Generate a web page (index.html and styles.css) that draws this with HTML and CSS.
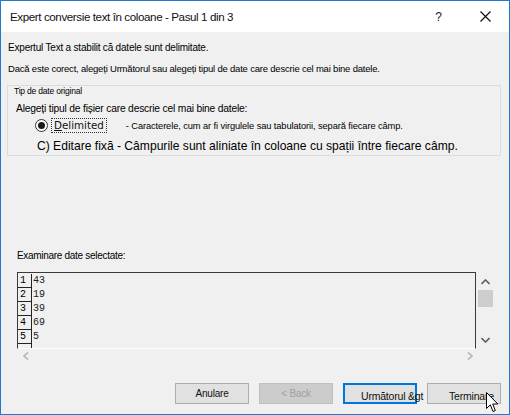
FILE: index.html
```html
<!DOCTYPE html>
<html lang="ro">
<head>
    <meta charset="UTF-8">
    <title>Expert conversie text în coloane</title>
    <link rel="stylesheet" href="styles.css">
</head>
<body>
    <div class="window">
        <div class="titlebar">
            <span class="title">Expert conversie text în coloane - Pasul 1 din 3</span>
            <span class="help">?</span>
            <svg class="close" width="11" height="11" viewBox="0 0 11 11">
                <path d="M0.5 0.5 L10.5 10.5 M10.5 0.5 L0.5 10.5" stroke="#111" stroke-width="1.2" fill="none"/>
            </svg>
        </div>

        <div class="content">
            <p class="intro">Expertul Text a stabilit că datele sunt delimitate.</p>
            <p class="hint">Dacă este corect, alegeți Următorul sau alegeți tipul de date care descrie cel mai bine datele.</p>

            <div class="group">
                <div class="legend">Tip de date original</div>
                <div class="group-label">Alegeți tipul de fișier care descrie cel mai bine datele:</div>
                <div class="radio-row">
                    <span class="radio"><span class="dot"></span></span>
                    <span class="radio-label"><u>D</u>elimited</span>
                    <span class="radio-desc">- Caracterele, cum ar fi virgulele sau tabulatorii, separă fiecare câmp.</span>
                </div>
                <div class="fixed-row">C) Editare fixă - Câmpurile sunt aliniate în coloane cu spații între fiecare câmp.</div>
            </div>

            <div class="preview-label">Examinare date selectate:</div>
            <div class="preview">
                <div class="grid">
                    <div class="row"><span class="num">1</span><span class="val">43</span></div>
                    <div class="row"><span class="num">2</span><span class="val">19</span></div>
                    <div class="row"><span class="num">3</span><span class="val">39</span></div>
                    <div class="row"><span class="num">4</span><span class="val">69</span></div>
                    <div class="row"><span class="num">5</span><span class="val">5</span></div>
                    <div class="row"><span class="num"></span><span class="val"></span></div>
                </div>
                <div class="vscroll">
                    <svg width="9" height="6" viewBox="0 0 9 6"><path d="M0.5 5 L4.5 1 L8.5 5" stroke="#606060" stroke-width="1.6" fill="none"/></svg>
                    <div class="thumb"></div>
                    <svg class="down" width="9" height="6" viewBox="0 0 9 6"><path d="M0.5 1 L4.5 5 L8.5 1" stroke="#606060" stroke-width="1.6" fill="none"/></svg>
                </div>
            </div>
            <div class="hscroll">
                <svg width="6" height="8" viewBox="0 0 6 8"><path d="M5 0.5 L1 4 L5 7.5" stroke="#b4b4b4" stroke-width="1.6" fill="none"/></svg>
                <svg width="6" height="8" viewBox="0 0 6 8"><path d="M1 0.5 L5 4 L1 7.5" stroke="#b4b4b4" stroke-width="1.6" fill="none"/></svg>
            </div>

            <div class="buttons">
                <button class="btn btn-center">Anulare</button>
                <button class="btn btn-center" disabled>&lt; Back</button>
                <button class="btn btn-focus">Următorul &amp;gt</button>
                <button class="btn btn-finish">Terminare</button>
            </div>
        </div>

        <svg class="cursor" width="13" height="21" viewBox="0 0 13 21">
            <path d="M0.5 0.5 L0.5 16.5 L4.3 12.8 L7 19.5 L9.3 18.5 L6.7 12 L11.8 12 Z" fill="#fff" stroke="#000" stroke-width="1"/>
        </svg>
    </div>
</body>
</html>
```

FILE: styles.css
```css
* {
    box-sizing: border-box;
}

body {
    margin: 0;
    font-family: 'Liberation Sans', Arial, sans-serif;
    color: #000;
    background: #f0f0f0;
}

.window {
    position: relative;
    width: 510px;
    height: 415px;
    border: 1px solid #1f7bd0;
    background: #f0f0f0;
    display: flex;
    flex-direction: column;
    overflow: hidden;
}

.titlebar {
    height: 31px;
    background: #fff;
    display: flex;
    align-items: center;
    padding-left: 9px;
}

.title {
    flex: 1;
    font-size: 11.6px;
    letter-spacing: -0.4px;
    color: #111;
}

.help {
    font-size: 12px;
    margin-right: 38px;
    color: #222;
}

.close {
    margin-right: 18px;
}

.content {
    flex: 1;
    display: flex;
    flex-direction: column;
}

.intro,
.hint {
    margin: 0 0 0 7px;
    line-height: 14px;
    letter-spacing: -0.2px;
}

.intro {
    margin-top: 9px;
    font-size: 10px;
}

.hint {
    margin-top: 7px;
    font-size: 9.5px;
}

.group {
    margin: 9px 8px 0 6px;
    border: 1px solid #dcdcdc;
    padding-bottom: 1px;
}

.legend {
    font-size: 8.5px;
    line-height: 10px;
    padding-left: 6px;
    letter-spacing: -0.2px;
}

.group-label {
    font-size: 10.3px;
    line-height: 12px;
    margin-top: 7px;
    padding-left: 8px;
    letter-spacing: -0.2px;
}

.radio-row {
    display: flex;
    align-items: center;
    height: 14px;
    margin-top: 3px;
    padding-left: 27px;
}

.radio {
    width: 13px;
    height: 13px;
    border: 1px solid #333;
    border-radius: 50%;
    display: flex;
    align-items: center;
    justify-content: center;
    background: #fff;
}

.dot {
    width: 7px;
    height: 7px;
    border-radius: 50%;
    background: #1a1a1a;
}

.radio-label {
    margin-left: 3px;
    padding: 0 2px;
    font-family: 'DejaVu Sans', Verdana, sans-serif;
    font-size: 10.3px;
    line-height: 13px;
    border: 1px dotted #333;
    color: #111;
}

.radio-desc {
    margin-left: 19px;
    font-size: 9.3px;
    letter-spacing: -0.1px;
    padding-top: 2px;
}

.fixed-row {
    margin-top: 6px;
    padding-left: 29px;
    font-size: 12.1px;
    line-height: 16px;
}

.preview-label {
    margin: 94px 0 0 16px;
    font-size: 10px;
    line-height: 12px;
    letter-spacing: -0.3px;
}

.preview {
    display: flex;
    margin: 10px 0 0 16px;
    height: 77px;
}

.grid {
    width: 459px;
    border: 1px solid #3a3a3a;
    border-bottom-color: #fff;
    overflow: hidden;
    font-family: 'Liberation Mono', 'Courier New', monospace;
    font-size: 10px;
    padding-top: 1px;
}

.row {
    display: flex;
    height: 14px;
}

.num {
    width: 14px;
    border-right: 1px solid #222;
    border-bottom: 1px solid #222;
    padding-left: 2px;
    line-height: 14px;
}

.val {
    padding-left: 1px;
    line-height: 14px;
    color: #222;
}

.vscroll {
    width: 17px;
    margin-left: 1px;
    display: flex;
    flex-direction: column;
    align-items: center;
    padding-top: 7px;
}

.thumb {
    width: 15px;
    height: 17px;
    margin-top: 5px;
    background: #cdcdcd;
}

.vscroll .down {
    margin-top: auto;
    margin-bottom: 6px;
}

.hscroll {
    display: flex;
    justify-content: space-between;
    align-items: center;
    height: 14px;
    margin: 0 0 0 22px;
    width: 450px;
}

.buttons {
    display: flex;
    justify-content: flex-end;
    gap: 10px;
    margin: 20px 8px 0 0;
}

.btn {
    width: 74px;
    height: 21px;
    font-family: 'Liberation Sans', Arial, sans-serif;
    font-size: 10px;
    letter-spacing: -0.2px;
    background: #e1e1e1;
    border: 1px solid #adadad;
    color: #111;
    padding: 0;
    white-space: nowrap;
    overflow: visible;
}

.btn-center {
    text-align: center;
}

.btn:disabled {
    background: #cccccc;
    border-color: #bfbfbf;
    color: #a0a0a0;
}

.btn-focus {
    border: 2px solid #0078d7;
    text-align: left;
    padding: 4px 0 0 16px;
    font-size: 10.5px;
}

.btn-finish {
    text-align: left;
    padding: 4px 0 0 21px;
    font-size: 10.5px;
}

.cursor {
    position: absolute;
    left: 485px;
    top: 391px;
}
```
